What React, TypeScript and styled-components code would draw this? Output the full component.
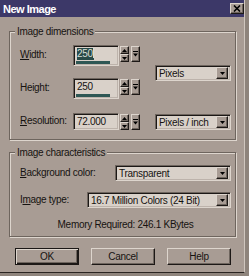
import React from "react";
import styled, { createGlobalStyle, css } from "styled-components";

const BG = "#a89c94";
const FIELD = "#d9d1c9";
const LIGHT = "#ddd5cd";
const SHADOW = "#6e655e";
const DARK = "#1c1816";

const Global = createGlobalStyle`
  html, body { margin: 0; padding: 0; background: #8e847c; }
  body {
    font-family: "Liberation Sans", Arial, sans-serif;
    font-size: 10px;
    letter-spacing: -0.3px;
    color: #161311;
  }
`;

const raised = css`
  box-sizing: border-box;
  background: ${BG};
  border: 1px solid;
  border-color: ${LIGHT} ${DARK} ${DARK} ${LIGHT};
  box-shadow: inset -1px -1px 0 ${SHADOW};
`;

const sunken = css`
  box-sizing: border-box;
  border: 1px solid;
  border-color: ${SHADOW} ${LIGHT} ${LIGHT} ${SHADOW};
  box-shadow: inset 1px 1px 0 ${DARK}, inset -1px -1px 0 #bdb3ab;
`;

const Window = styled.div`
  width: 245px;
  height: 273px;
  box-sizing: border-box;
  background: ${BG};
  border-right: 1px solid #cfc6be;
  border-bottom: 1px solid #2a2522;
  display: flex;
  flex-direction: column;
`;

const TitleBar = styled.div`
  height: 17px;
  background: #3c3868;
  display: flex;
  align-items: center;
  justify-content: space-between;
  padding: 0 0 0 3px;
`;

const Title = styled.span`
  color: #ffffff;
  font-weight: bold;
  font-size: 11px;
  letter-spacing: -0.5px;
`;

const CloseButton = styled.div`
  ${raised};
  width: 14px;
  height: 11px;
  display: flex;
  align-items: center;
  justify-content: center;
`;

const Body = styled.div`
  padding: 8px 0 0 9px;
  display: flex;
  flex-direction: column;
`;

const Group = styled.fieldset<{ $gap?: number }>`
  width: 227px;
  box-sizing: border-box;
  margin: ${(p) => p.$gap ?? 0}px 0 0 0;
  min-width: 0;
  border: 1px solid ${SHADOW};
  box-shadow: 1px 1px 0 ${LIGHT}, inset 1px 1px 0 ${LIGHT};
`;

const Legend = styled.legend`
  margin-left: -5px;
  padding: 0 2px;
  background: ${BG};
  line-height: 13px;
  font-size: 10px;
`;

const DimGroup = styled(Group)`
  padding: 7px 4px 10px 10px;
`;

const CharGroup = styled(Group)`
  padding: 6px 4px 5px 10px;
`;

const DimGrid = styled.div`
  display: grid;
  grid-template-columns: 53px 82px 76px;
  grid-template-rows: 33px 35px 16px;
  align-items: start;
`;

const Label = styled.span<{ $h: number }>`
  line-height: ${(p) => p.$h}px;
  white-space: nowrap;
`;

const Key = styled.span`
  text-decoration: underline;
`;

const SpinControl = styled.div`
  display: flex;
  align-items: flex-start;
`;

const Field = styled.div`
  ${sunken};
  width: 46px;
  background: ${FIELD};
  padding: 2px 1px 1px 2px;
  display: flex;
  flex-direction: column;
`;

const FieldText = styled.div`
  height: 12px;
  line-height: 12px;
  padding-left: 1px;
  white-space: nowrap;
`;

const Selected = styled.span`
  display: inline-block;
  line-height: 12px;
  background: #284a48;
  color: #d6ded6;
`;

const Caret = styled.span`
  display: inline-block;
  width: 1px;
  height: 10px;
  background: #d6ded6;
  vertical-align: -1px;
`;

const SliderTrack = styled.div`
  height: 3px;
  margin-top: 1px;
`;

const SliderFill = styled.div`
  height: 100%;
  background: #2e5754;
`;

const SpinButtons = styled.div`
  display: flex;
  flex-direction: column;
  margin: 1px 0 0 1px;
`;

const SpinButton = styled.div`
  ${raised};
  width: 9px;
  height: 8px;
  display: flex;
  align-items: center;
  justify-content: center;
`;

const SliderButton = styled.div`
  ${raised};
  width: 9px;
  height: 16px;
  margin: 1px 0 0 2px;
  display: flex;
  align-items: center;
  justify-content: center;
`;

const Combo = styled.div<{ $w: number; $row?: string; $top?: number }>`
  ${sunken};
  width: ${(p) => p.$w}px;
  height: 16px;
  background: ${FIELD};
  display: flex;
  align-items: center;
  padding: 0 2px 0 2px;
  grid-column: 3;
  grid-row: ${(p) => p.$row ?? "auto"};
  margin-top: ${(p) => p.$top ?? 0}px;
`;

const ComboText = styled.span`
  flex: 1;
  padding-left: 1px;
  white-space: nowrap;
  overflow: hidden;
`;

const ComboButton = styled.div`
  ${raised};
  width: 12px;
  height: 12px;
  display: flex;
  align-items: center;
  justify-content: center;
`;

const CharRows = styled.div`
  display: flex;
  flex-direction: column;
  gap: 11px;
`;

const CharRow = styled.div`
  display: flex;
  align-items: center;
  justify-content: space-between;
`;

const Memory = styled.div`
  margin-top: 10px;
  line-height: 13px;
  text-align: center;
`;

const ButtonRow = styled.div`
  display: flex;
  gap: 12px;
  margin-top: 11px;
  padding-left: 6px;
`;

const Button = styled.div<{ $default?: boolean }>`
  box-sizing: border-box;
  width: 64px;
  height: 17px;
  display: flex;
  align-items: center;
  justify-content: center;
  background: ${BG};
  border: 1px solid;
  border-color: ${(p) => (p.$default ? `${DARK}` : `${LIGHT} ${DARK} ${DARK} ${LIGHT}`)};
  box-shadow: ${(p) =>
    p.$default
      ? `inset 1px 1px 0 ${LIGHT}, inset -1px -1px 0 ${DARK}, inset -2px -2px 0 ${SHADOW}`
      : `inset -1px -1px 0 ${SHADOW}`};
`;

const UpArrow = () => (
  <svg width="5" height="3" viewBox="0 0 5 3">
    <polygon points="0,3 2.5,0 5,3" fill="#000" />
  </svg>
);

const DownArrow = () => (
  <svg width="5" height="3" viewBox="0 0 5 3">
    <polygon points="0,0 5,0 2.5,3" fill="#000" />
  </svg>
);

const BarArrow = () => (
  <svg width="5" height="6" viewBox="0 0 5 6">
    <rect x="0" y="0" width="5" height="1" fill="#000" />
    <polygon points="0,2.5 5,2.5 2.5,5.5" fill="#000" />
  </svg>
);

const CloseIcon = () => (
  <svg width="8" height="7" viewBox="0 0 8 7">
    <path d="M1 0.5 L7 6.5 M7 0.5 L1 6.5" stroke="#000" strokeWidth="1.6" />
  </svg>
);

const Spinner: React.FC<{ value: React.ReactNode; slider?: number }> = ({ value, slider }) => (
  <SpinControl>
    <Field>
      <FieldText>{value}</FieldText>
      {slider !== undefined && (
        <SliderTrack>
          <SliderFill style={{ width: `${slider}%` }} />
        </SliderTrack>
      )}
    </Field>
    <SpinButtons>
      <SpinButton>
        <UpArrow />
      </SpinButton>
      <SpinButton>
        <DownArrow />
      </SpinButton>
    </SpinButtons>
    <SliderButton>
      <BarArrow />
    </SliderButton>
  </SpinControl>
);

const DropDown: React.FC<{ text: string; w: number; row?: string; top?: number }> = ({
  text,
  w,
  row,
  top,
}) => (
  <Combo $w={w} $row={row} $top={top}>
    <ComboText>{text}</ComboText>
    <ComboButton>
      <DownArrow />
    </ComboButton>
  </Combo>
);

export default function App() {
  return (
    <>
      <Global />
      <Window>
        <TitleBar>
          <Title>New Image</Title>
          <CloseButton>
            <CloseIcon />
          </CloseButton>
        </TitleBar>
        <Body>
          <DimGroup>
            <Legend>Image dimensions</Legend>
            <DimGrid>
              <Label $h={19}>
                <Key>W</Key>idth:
              </Label>
              <Spinner
                value={
                  <Selected>
                    250
                    <Caret />
                  </Selected>
                }
                slider={82}
              />
              <DropDown text="Pixels" w={76} row="1 / 3" top={20} />
              <Label $h={19}>Height:</Label>
              <Spinner value="250" slider={82} />
              <Label $h={16}>
                <Key>R</Key>esolution:
              </Label>
              <Spinner value="72.000" />
              <DropDown text="Pixels / inch" w={76} row="3" top={1} />
            </DimGrid>
          </DimGroup>
          <CharGroup $gap={6}>
            <Legend>Image characteristics</Legend>
            <CharRows>
              <CharRow>
                <Label $h={16}>
                  <Key>B</Key>ackground color:
                </Label>
                <Combo $w={116}>
                  <ComboText>Transparent</ComboText>
                  <ComboButton>
                    <DownArrow />
                  </ComboButton>
                </Combo>
              </CharRow>
              <CharRow>
                <Label $h={16}>
                  I<Key>m</Key>age type:
                </Label>
                <Combo $w={144}>
                  <ComboText>16.7 Million Colors (24 Bit)</ComboText>
                  <ComboButton>
                    <DownArrow />
                  </ComboButton>
                </Combo>
              </CharRow>
            </CharRows>
            <Memory>Memory Required: 246.1 KBytes</Memory>
          </CharGroup>
          <ButtonRow>
            <Button $default>OK</Button>
            <Button>Cancel</Button>
            <Button>Help</Button>
          </ButtonRow>
        </Body>
      </Window>
    </>
  );
}
